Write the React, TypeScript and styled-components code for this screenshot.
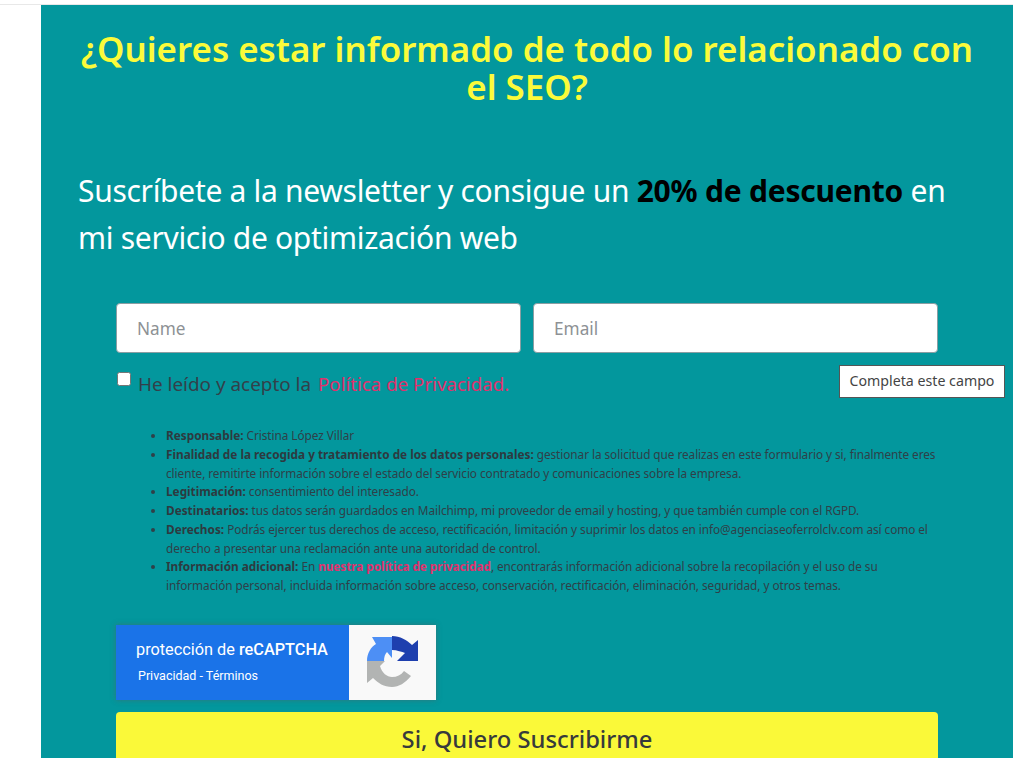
import React from "react";
import styled, { createGlobalStyle } from "styled-components";

const Global = createGlobalStyle`
  html, body { margin: 0; padding: 0; background: #fff; overflow: hidden; }
  body { font-family: "Noto Sans", "Open Sans", sans-serif; }
`;

const Page = styled.div`
  height: 758px;
  overflow: hidden;
  padding-top: 4px;
  box-sizing: border-box;
  position: relative;
`;

const Rule = styled.div`
  height: 1px;
  background: #e8e8e8;
  width: 1013px;
`;

const Panel = styled.main`
  position: relative;
  margin-left: 41px;
  width: 972px;
  height: 753px;
  background: #03979d;
  padding: 25px 37px 0;
  box-sizing: border-box;
`;

const Title = styled.h2`
  margin: 0;
  color: #fbfb3a;
  font-size: 34.9px;
  font-weight: 600;
  line-height: 38px;
  text-align: center;
`;

const Lead = styled.p`
  margin: 61px 0 0;
  color: #fff;
  font-size: 30px;
  font-weight: 400;
  line-height: 47px;
  letter-spacing: -0.3px;
  b { color: #000; font-weight: 700; letter-spacing: -0.22px; }
`;

const Form = styled.form`
  margin: 42px 38px 0;
  width: 822px;
`;

const Fields = styled.div`
  display: grid;
  grid-template-columns: 405px 405px;
  gap: 12px;
`;

const Field = styled.input`
  height: 49.5px;
  box-sizing: border-box;
  border: 1px solid #8a9ea3;
  border-radius: 4px;
  background: #fff;
  padding: 1px 20px 0;
  font: 400 17.2px "Noto Sans", sans-serif;
  outline: none;
  &::placeholder { color: #8d9194; opacity: 1; }
`;

const Consent = styled.label`
  display: flex;
  align-items: flex-start;
  margin-top: 19.5px;
  color: #33404a;
  font-size: 18.9px;
  line-height: 24px;
  a { color: #e0316c; text-decoration: none; margin-left: 7px; font-size: 18.7px; }
`;

const Check = styled.span`
  flex: none;
  width: 14px;
  height: 14px;
  margin: 0 7px 0 1px;
  background: #fff;
  border: 1px solid #767676;
  border-radius: 2.5px;
  box-sizing: border-box;
`;

const Notes = styled.ul`
  margin: 30px 0 0;
  padding: 0 0 0 50px;
  width: 774px;
  color: #2f4048;
  font-size: 11.8px;
  line-height: 18.75px;
  letter-spacing: -0.06px;
  li::marker { font-size: 12px; }
  b { font-weight: 700; color: #2d3a40; letter-spacing: 0; }
  a { color: #e0316c; font-weight: 700; text-decoration: none; }
`;

const Badge = styled.div`
  display: flex;
  width: 320px;
  height: 75px;
  margin-top: 30px;
  box-shadow: 0 0 5px rgba(90, 90, 90, 0.55);
  font-family: Roboto, sans-serif;
`;

const BadgeText = styled.div`
  width: 233px;
  background: #1a73e8;
  color: #fff;
  padding: 15px 0 0 20px;
  box-sizing: border-box;
  display: flex;
  flex-direction: column;
`;

const BadgeTitle = styled.span`
  font-size: 16.3px;
  line-height: 20px;
  b { font-weight: 500; }
`;

const BadgeLinks = styled.span`
  font-size: 12.5px;
  line-height: 16px;
  margin: 8px 0 0 2px;
`;

const BadgeLogo = styled.div`
  flex: 1;
  background: #f9f9f9;
  display: flex;
  align-items: center;
  justify-content: center;
`;

const Submit = styled.button`
  display: block;
  width: 822px;
  height: 60px;
  margin-top: 12px;
  border: 0;
  border-radius: 4px;
  background: #faf939;
  color: #373a3c;
  font: 500 23.75px "Noto Sans", sans-serif;
  padding: 0 0 6px;
`;

const Tip = styled.div`
  position: absolute;
  left: 798px;
  top: 360px;
  width: 166px;
  height: 33px;
  box-sizing: border-box;
  background: #fff;
  border: 1px solid #555;
  color: #444;
  font-size: 14.2px;
  line-height: 29px;
  text-align: center;
  white-space: nowrap;
`;

const Logo = () => (
  <svg width="52" height="52" viewBox="0 0 52 52">
    <path fill="#1e3fae" d="M25 0 C33 0 40 4 45 9 L51 4 V25 H30 L38 17 C35 16 30 14 25 14 Z" />
    <path fill="#4d8ff5" d="M0 25 C0 17 4 11 9 8 L5 1 H25 V22 L20 16 C18 18 17 21 17 25 Z" />
    <path fill="#b2b4b3" d="M0 25 H18 L13 30 C15 37 20 41 25 41 C30 41 34 39 37 35 L44 40 C38 47 32 51 25 51 C17 51 11 47 6 42 L0 47 Z" />
  </svg>
);

export default function App() {
  return (
    <Page>
      <Global />
      <Rule />
      <Panel>
        <Title>¿Quieres estar informado de todo lo relacionado con el SEO?</Title>
        <Lead>
          Suscríbete a la newsletter y consigue un <b>20% de descuento</b> en mi servicio de optimización web
        </Lead>
        <Form>
          <Fields>
            <Field placeholder="Name" />
            <Field placeholder="Email" />
          </Fields>
          <Consent>
            <Check />
            He leído y acepto la <a href="#p">Política de Privacidad.</a>
          </Consent>
          <Notes>
            <li><b>Responsable:</b> Cristina López Villar</li>
            <li><b>Finalidad de la recogida y tratamiento de los datos personales:</b> gestionar la solicitud que realizas en este formulario y si, finalmente eres cliente, remitirte información sobre el estado del servicio contratado y comunicaciones sobre la empresa.</li>
            <li><b>Legitimación:</b> consentimiento del interesado.</li>
            <li><b>Destinatarios:</b> tus datos serán guardados en Mailchimp, mi proveedor de email y hosting, y que también cumple con el RGPD.</li>
            <li><b>Derechos:</b> Podrás ejercer tus derechos de acceso, rectificación, limitación y suprimir los datos en info@agenciaseoferrolclv.com así como el derecho a presentar una reclamación ante una autoridad de control.</li>
            <li><b>Información adicional:</b> En <a href="#p">nuestra política de privacidad</a>, encontrarás información adicional sobre la recopilación y el uso de su información personal, incluida información sobre acceso, conservación, rectificación, eliminación, seguridad, y otros temas.</li>
          </Notes>
          <Badge>
            <BadgeText>
              <BadgeTitle>protección de <b>reCAPTCHA</b></BadgeTitle>
              <BadgeLinks>Privacidad - Términos</BadgeLinks>
            </BadgeText>
            <BadgeLogo><Logo /></BadgeLogo>
          </Badge>
          <Submit type="button">Si, Quiero Suscribirme</Submit>
        </Form>
        <Tip>Completa este campo</Tip>
      </Panel>
    </Page>
  );
}
